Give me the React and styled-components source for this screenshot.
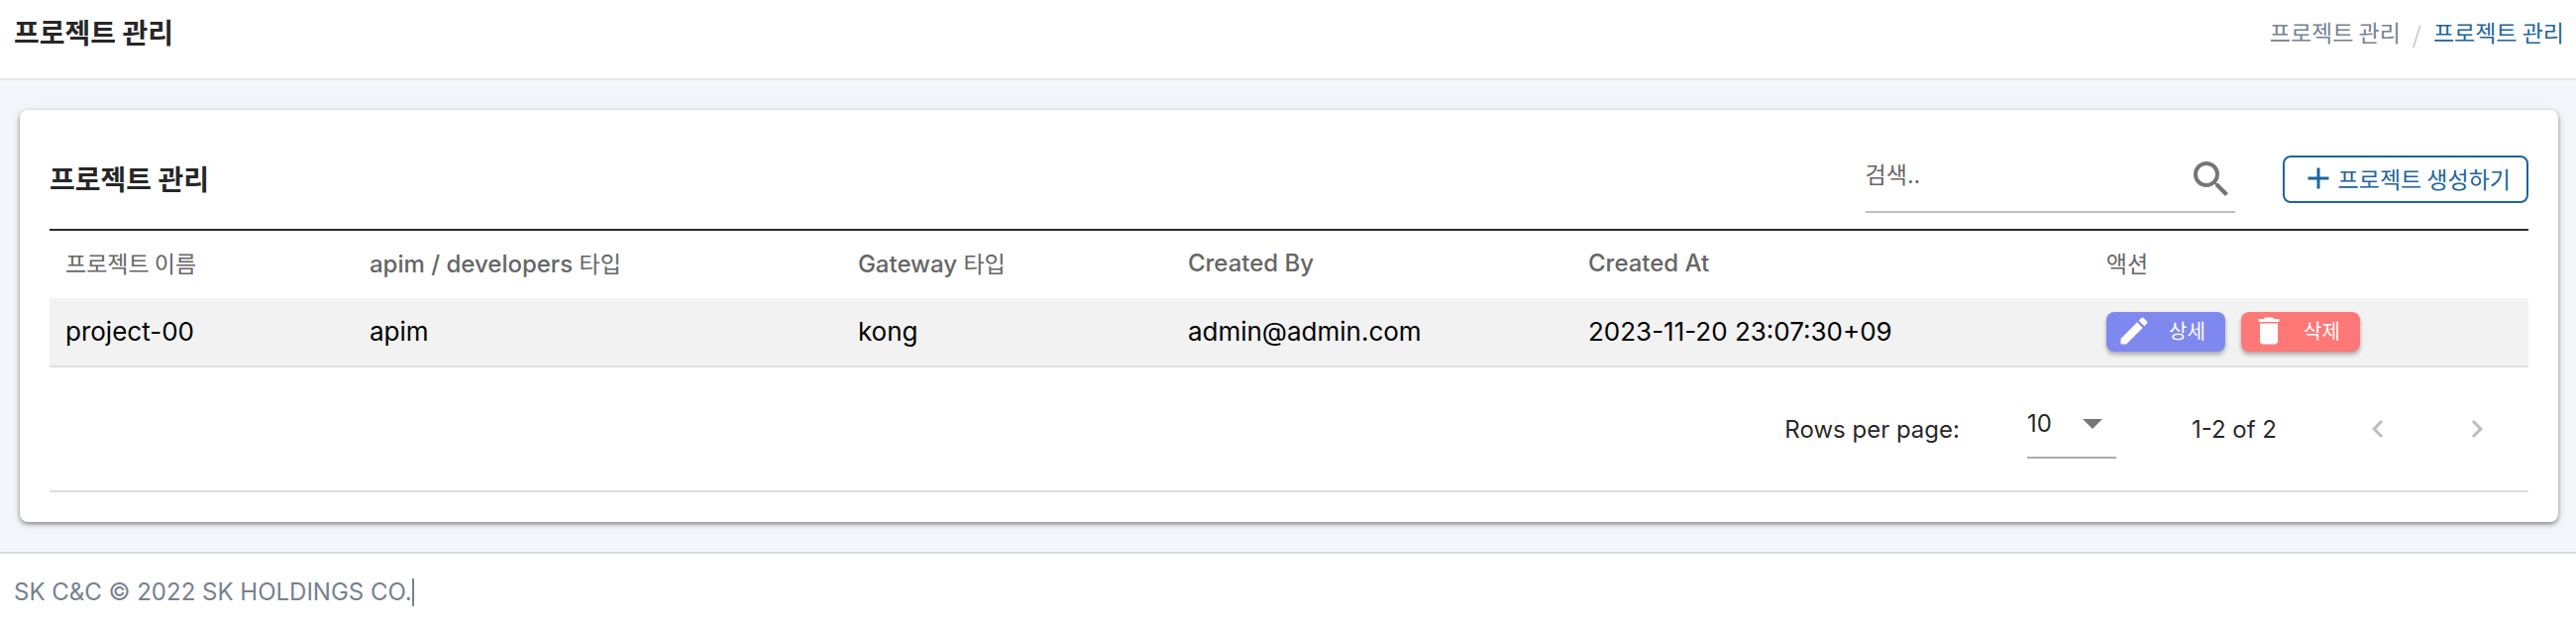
import React from 'react';
import styled, { createGlobalStyle } from 'styled-components';
import {
  MdAdd,
  MdArrowDropDown,
  MdChevronLeft,
  MdChevronRight,
  MdDelete,
  MdEdit,
  MdSearch,
} from 'react-icons/md';

const hangulFont = '"Noto Sans CJK KR", Inter, sans-serif';

const GlobalStyle = createGlobalStyle`
  *, *::before, *::after { box-sizing: border-box; }
  body {
    margin: 0;
    background: #fff;
    color: rgba(0, 0, 0, 0.87);
    font-family: Inter, "Noto Sans CJK KR", sans-serif;
    font-size: 24px;
  }
  button, input, select { font: inherit; color: inherit; }
  svg { display: block; flex: none; }
`;

const Header = styled.header`
  display: flex;
  justify-content: space-between;
  align-items: flex-start;
  padding: 12px 12px 25px 14px;
  background: #fff;
  border-bottom: 2px solid #e7e7e7;
`;

const Title = styled.h1`
  margin: 0;
  font-family: ${hangulFont};
  font-size: 28px;
  line-height: 40px;
  font-weight: 700;
`;

const Breadcrumb = styled.nav`
  display: flex;
  gap: 12px;
  font-family: ${hangulFont};
  font-size: 23px;
  line-height: 40px;
`;

const Crumb = styled.a`
  color: ${(p) => (p.$current ? '#1d65a0' : '#768192')};
  text-decoration: none;
`;

const Divider = styled.span`
  padding-top: 2px;
  color: #c8c8c8;
`;

const Main = styled.main`
  padding: 30px 18px 30px 20px;
  background: #f4f6fb;
`;

const Card = styled.section`
  padding: 34px 30px 30px;
  background: #fff;
  border-radius: 8px;
  box-shadow: 0 2px 4px rgba(0, 0, 0, 0.4), 0 2px 12px rgba(0, 0, 0, 0.12);
`;

const Toolbar = styled.div`
  display: flex;
  align-items: flex-start;
  padding-bottom: 16px;
  border-bottom: 2px solid #2a2a32;
`;

const CardTitle = styled(Title).attrs({ as: 'h2' })`
  flex: 1;
  padding-top: 15px;
`;

const Search = styled.label`
  display: flex;
  align-items: flex-start;
  width: 373px;
  height: 70px;
  margin-right: 48px;
  padding-top: 12px;
  border-bottom: 2px solid #bdbdbd;
  color: #757575;
`;

const SearchInput = styled.input`
  flex: 1;
  min-width: 0;
  height: 40px;
  padding: 0;
  border: 0;
  outline: 0;
  background: none;
  font-size: 23px;
  &::placeholder { color: #666; opacity: 1; }
`;

const CreateButton = styled.button`
  display: flex;
  align-items: center;
  gap: 2px;
  height: 48px;
  margin-top: 12px;
  padding: 0 16px 2px;
  border: 2px solid #1d65a0;
  border-radius: 8px;
  background: #fff;
  color: #1d65a0;
  font-family: ${hangulFont};
  font-size: 23px;
  line-height: 40px;
`;

const Table = styled.table`
  width: 100%;
  table-layout: fixed;
  border-collapse: separate;
  border-spacing: 0;
`;

const Col = styled.col`
  width: ${(p) => p.$share};
`;

const HeadCell = styled.th`
  height: 68px;
  padding: 0 16px 2px;
  color: #666;
  font-weight: 500;
  line-height: 32px;
  text-align: left;
  white-space: nowrap;
`;

const Hangul = styled.span`
  font-family: ${hangulFont};
  font-size: 23px;
  font-weight: 400;
`;

const Cell = styled.td`
  height: 70px;
  padding: 0 16px;
  border-bottom: 2px solid #e0e0e0;
  background: #f2f2f2;
  color: #000;
  font-size: 26px;
  line-height: 32px;
  white-space: nowrap;
`;

const Actions = styled.div`
  display: flex;
  gap: 16px;
`;

const ActionButton = styled.button`
  display: flex;
  align-items: center;
  justify-content: space-between;
  width: 120px;
  height: 40px;
  padding: 0 20px 2px 10px;
  border: 0;
  border-radius: 8px;
  background: ${(p) => p.$color};
  color: #fff;
  font-family: ${hangulFont};
  font-size: 20px;
  box-shadow: 0 3px 4px rgba(0, 0, 0, 0.3);
`;

const Pagination = styled.div`
  display: flex;
  align-items: center;
  justify-content: flex-end;
  height: 126px;
  padding-right: 2px;
  border-bottom: 2px solid #dcdce2;
`;

const RowsLabel = styled.label`
  margin-right: 68px;
`;

const SelectBox = styled.div`
  display: grid;
  align-items: center;
  width: 90px;
  height: 60px;
  margin-right: 76px;
  padding-bottom: 10px;
  border-bottom: 2px solid #adadad;
  color: #757575;
  & > * { grid-area: 1 / 1; }
  & > svg { justify-self: end; pointer-events: none; }
`;

const Select = styled.select`
  appearance: none;
  width: 100%;
  height: 48px;
  padding: 0;
  border: 0;
  background: none;
  color: rgba(0, 0, 0, 0.87);
`;

const Range = styled.span`
  margin-right: 52px;
`;

const PageButton = styled.button`
  display: flex;
  align-items: center;
  justify-content: center;
  width: 100px;
  height: 72px;
  padding: 0;
  border: 0;
  background: none;
  color: #bdbdbd;
`;

const Footer = styled.footer`
  display: flex;
  padding: 25px 14px 19px;
  border-top: 2px solid #d8dbe0;
  background: #fff;
  color: #768192;
`;

const Copyright = styled.span`
  border-right: 2px solid #768192;
  line-height: 28px;
`;

const columns = [
  { hangul: '프로젝트 이름', share: '12.27%' },
  { latin: 'apim / developers ', hangul: '타입', share: '19.7%' },
  { latin: 'Gateway ', hangul: '타입', share: '13.31%' },
  { latin: 'Created By', share: '16.15%' },
  { latin: 'Created At', share: '20.9%' },
  { hangul: '액션', share: '17.67%' },
];

const projects = [
  ['project-00', 'apim', 'kong', 'admin@admin.com', '2023-11-20 23:07:30+09'],
];

export default function App() {
  return (
    <>
      <GlobalStyle />
      <Header>
        <Title>프로젝트 관리</Title>
        <Breadcrumb>
          <Crumb href="#projects">프로젝트 관리</Crumb>
          <Divider>/</Divider>
          <Crumb href="#list" $current>프로젝트 관리</Crumb>
        </Breadcrumb>
      </Header>
      <Main>
        <Card>
          <Toolbar>
            <CardTitle>프로젝트 관리</CardTitle>
            <Search>
              <SearchInput type="text" placeholder="검색.." aria-label="검색" />
              <MdSearch size={48} />
            </Search>
            <CreateButton type="button">
              <MdAdd size={36} />
              프로젝트 생성하기
            </CreateButton>
          </Toolbar>
          <Table>
            <colgroup>
              {columns.map((c, i) => <Col key={i} $share={c.share} />)}
            </colgroup>
            <thead>
              <tr>
                {columns.map((c, i) => (
                  <HeadCell key={i} scope="col">
                    {c.latin}
                    {c.hangul && <Hangul>{c.hangul}</Hangul>}
                  </HeadCell>
                ))}
              </tr>
            </thead>
            <tbody>
              {projects.map((row) => (
                <tr key={row[0]}>
                  {row.map((value) => <Cell key={value}>{value}</Cell>)}
                  <Cell>
                    <Actions>
                      <ActionButton type="button" $color="#7f88ee">
                        <MdEdit size={36} />
                        상세
                      </ActionButton>
                      <ActionButton type="button" $color="#ff7878">
                        <MdDelete size={36} />
                        삭제
                      </ActionButton>
                    </Actions>
                  </Cell>
                </tr>
              ))}
            </tbody>
          </Table>
          <Pagination>
            <RowsLabel htmlFor="rows">Rows per page:</RowsLabel>
            <SelectBox>
              <Select id="rows" defaultValue="10">
                <option>10</option>
                <option>25</option>
                <option>50</option>
              </Select>
              <MdArrowDropDown size={48} />
            </SelectBox>
            <Range>1-2 of 2</Range>
            <PageButton type="button" aria-label="이전 페이지" disabled>
              <MdChevronLeft size={36} />
            </PageButton>
            <PageButton type="button" aria-label="다음 페이지" disabled>
              <MdChevronRight size={36} />
            </PageButton>
          </Pagination>
        </Card>
      </Main>
      <Footer>
        <Copyright>SK C&amp;C © 2022 SK HOLDINGS CO.</Copyright>
      </Footer>
    </>
  );
}
